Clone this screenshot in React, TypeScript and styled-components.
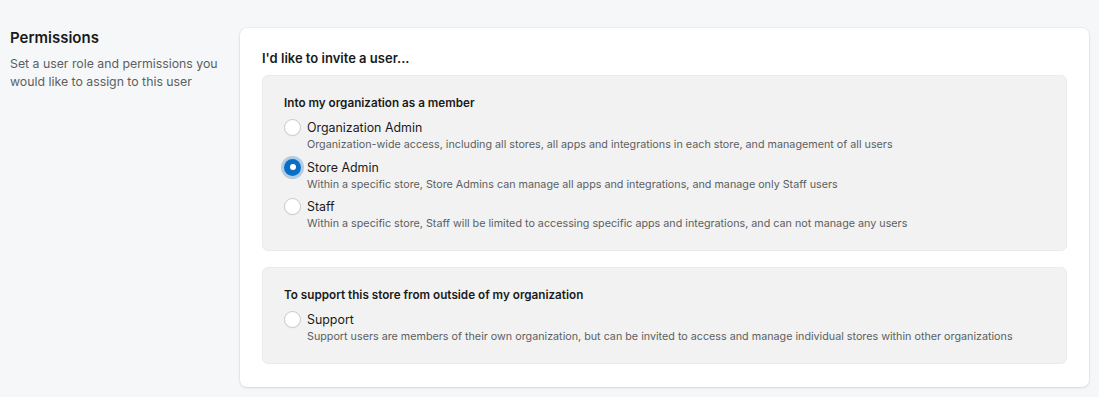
import React from "react";
import styled, { createGlobalStyle } from "styled-components";

const GlobalStyle = createGlobalStyle`
  html, body { margin: 0; padding: 0; background: #f6f7f9; }
  body { font-family: Inter, "Noto Sans", "Liberation Sans", sans-serif; color: #1a1a1a; -webkit-font-smoothing: antialiased; }
  * { box-sizing: border-box; }
`;

const Page = styled.div`
  display: grid;
  grid-template-columns: 220px 1fr;
  column-gap: 10px;
  padding: 28px 10px 10px 10px;
  min-height: 397px;
`;

const Intro = styled.div`
  display: flex;
  flex-direction: column;
`;

const IntroTitle = styled.h2`
  margin: 0;
  font-size: 15px;
  line-height: 20px;
  font-weight: 600;
  color: #1a1a1a;
`;

const IntroText = styled.p`
  margin: 7px 0 0 0;
  font-size: 12.3px;
  line-height: 18px;
  color: #5c5f62;
`;

const Card = styled.section`
  background: #ffffff;
  border-radius: 7px;
  box-shadow: 0 0 0 1px rgba(0, 0, 0, 0.03), 0 1px 3px rgba(0, 0, 0, 0.1);
  padding: 21px 22px 23px 22px;
  display: flex;
  flex-direction: column;
`;

const CardTitle = styled.h3`
  margin: 0 0 8px 0;
  font-size: 13px;
  line-height: 18px;
  font-weight: 600;
  color: #1a1a1a;
`;

const Groups = styled.div`
  display: flex;
  flex-direction: column;
  gap: 16px;
`;

const Group = styled.div`
  background: #f2f2f2;
  border: 1px solid #ebebeb;
  border-radius: 6px;
  padding: 19px 21px 19px 21px;
  display: flex;
  flex-direction: column;
`;

const GroupTitle = styled.div`
  font-size: 11.7px;
  line-height: 16px;
  font-weight: 600;
  color: #1a1a1a;
  margin-bottom: 7px;
`;

const Options = styled.div`
  display: flex;
  flex-direction: column;
  gap: 5.5px;
`;

const Option = styled.label`
  display: grid;
  grid-template-columns: 17px 1fr;
  column-gap: 6px;
  cursor: pointer;
`;

const Radio = styled.span<{ $checked?: boolean }>`
  width: 17px;
  height: 17px;
  margin-top: 1px;
  border-radius: 50%;
  display: flex;
  align-items: center;
  justify-content: center;
  background: ${(p) => (p.$checked ? "#0a6fc2" : "#ffffff")};
  border: ${(p) => (p.$checked ? "none" : "1px solid #c9c9c9")};
  box-shadow: ${(p) => (p.$checked ? "0 0 0 3px rgba(10, 111, 194, 0.28)" : "0 0.5px 1px rgba(0,0,0,0.05)")};
  &::after {
    content: "";
    display: ${(p) => (p.$checked ? "block" : "none")};
    width: 6px;
    height: 6px;
    border-radius: 50%;
    background: #ffffff;
  }
`;

const OptionBody = styled.div`
  display: flex;
  flex-direction: column;
`;

const OptionLabel = styled.span`
  font-size: 12.4px;
  line-height: 19px;
  color: #1a1a1a;
`;

const OptionDesc = styled.span`
  font-size: 10.75px;
  line-height: 15px;
  color: #5c5f62;
`;

type Opt = { label: string; desc: string; checked?: boolean };

const memberOptions: Opt[] = [
  {
    label: "Organization Admin",
    desc: "Organization-wide access, including all stores, all apps and integrations in each store, and management of all users",
  },
  {
    label: "Store Admin",
    desc: "Within a specific store, Store Admins can manage all apps and integrations, and manage only Staff users",
    checked: true,
  },
  {
    label: "Staff",
    desc: "Within a specific store, Staff will be limited to accessing specific apps and integrations, and can not manage any users",
  },
];

const supportOptions: Opt[] = [
  {
    label: "Support",
    desc: "Support users are members of their own organization, but can be invited to access and manage individual stores within other organizations",
  },
];

const OptionList = ({ items }: { items: Opt[] }) => (
  <Options>
    {items.map((o) => (
      <Option key={o.label}>
        <Radio $checked={o.checked} />
        <OptionBody>
          <OptionLabel>{o.label}</OptionLabel>
          <OptionDesc>{o.desc}</OptionDesc>
        </OptionBody>
      </Option>
    ))}
  </Options>
);

export default function App() {
  return (
    <>
      <GlobalStyle />
      <Page>
        <Intro>
          <IntroTitle>Permissions</IntroTitle>
          <IntroText>Set a user role and permissions you would like to assign to this user</IntroText>
        </Intro>
        <Card>
          <CardTitle>I'd like to invite a user...</CardTitle>
          <Groups>
            <Group>
              <GroupTitle>Into my organization as a member</GroupTitle>
              <OptionList items={memberOptions} />
            </Group>
            <Group>
              <GroupTitle>To support this store from outside of my organization</GroupTitle>
              <OptionList items={supportOptions} />
            </Group>
          </Groups>
        </Card>
      </Page>
    </>
  );
}
